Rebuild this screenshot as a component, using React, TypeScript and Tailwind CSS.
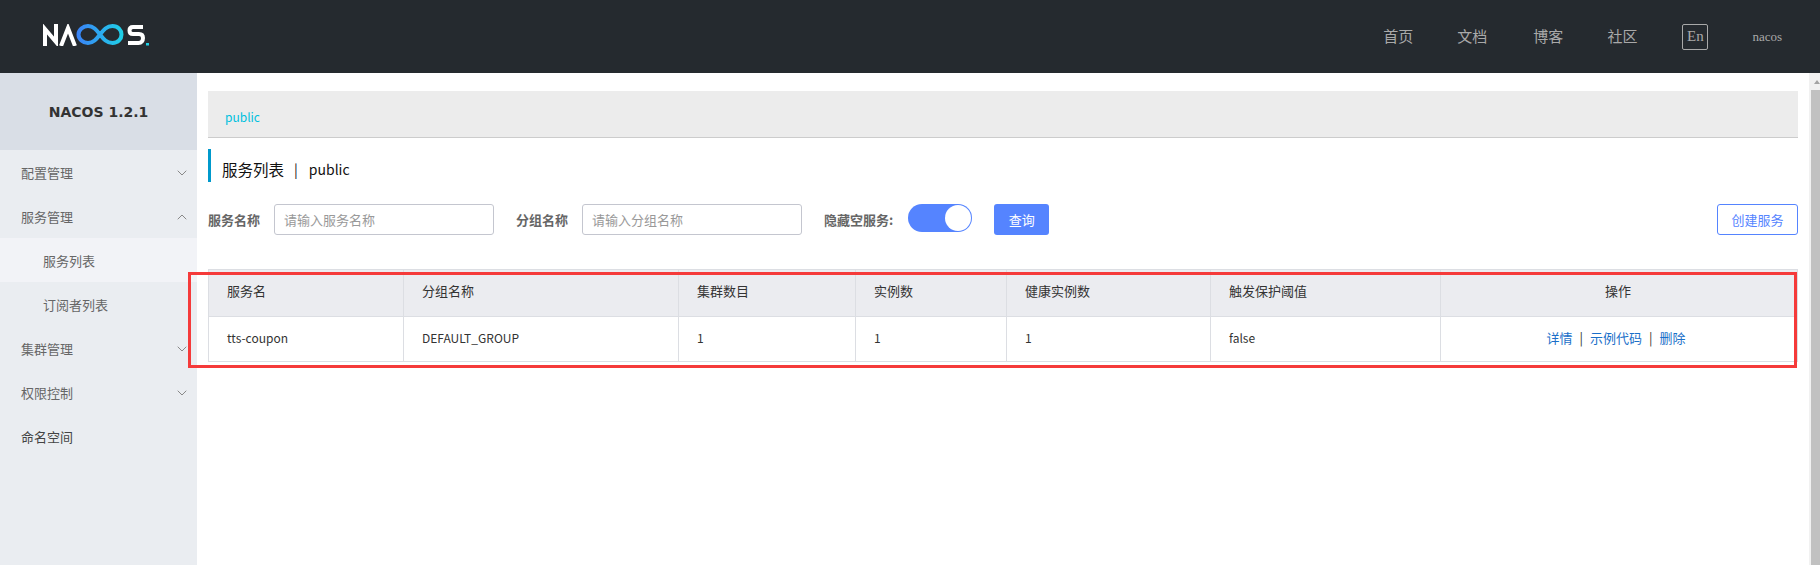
import { ChevronDown, ChevronUp } from "lucide-react";

const nav = [
  { label: "首页", cls: "mr-[44px]" },
  { label: "文档", cls: "mr-[46px]" },
  { label: "博客", cls: "mr-[44px]" },
  { label: "社区", cls: "mr-[45px]" },
];

const menu = [
  { label: "配置管理", icon: "down" },
  { label: "服务管理", icon: "up" },
  { label: "服务列表", sub: true, active: true },
  { label: "订阅者列表", sub: true },
  { label: "集群管理", icon: "down" },
  { label: "权限控制", icon: "down" },
  { label: "命名空间", dark: true },
];

const columns = [
  { label: "服务名", cls: "w-[195px]" },
  { label: "分组名称", cls: "w-[275px]" },
  { label: "集群数目", cls: "w-[177px]" },
  { label: "实例数", cls: "w-[151px]" },
  { label: "健康实例数", cls: "w-[204px]" },
  { label: "触发保护阈值", cls: "w-[230px]" },
];

const row = ["tts-coupon", "DEFAULT_GROUP", "1", "1", "1", "false"];

function Logo() {
  return (
    <svg width="107" height="22" viewBox="0 0 107 22" fill="none" className="mb-[3px]">
      <defs>
        <linearGradient id="loop" x1="34" x2="80" y1="0" y2="0" gradientUnits="userSpaceOnUse">
          <stop offset="0" stopColor="#3a82f7" />
          <stop offset="1" stopColor="#1fd0e6" />
        </linearGradient>
      </defs>
      <path d="M2 22V5L13 18V0" stroke="#fff" strokeWidth="4" />
      <path d="M18 22L25 4L32 22" stroke="#fff" strokeWidth="4" />
      <path
        d="M45 2C40 2 35.500 6 35.500 10.500C35.500 15 40 19 45 19C50.500 19 53.500 15 57 10.500C60.500 6 63.500 2 69.500 2C75 2 78.500 6 78.500 10.500C78.500 15 75 19 69.500 19C63.500 19 60.500 15 57 10.500C53.500 6 50.500 2 45 2Z"
        stroke="url(#loop)"
        strokeWidth="4"
      />
      <path
        d="M100 3H90C87.500 3 86.500 4.500 86.500 6.500C86.500 8.800 88 10 90 10H96C99 10 100 11.800 100 14C100 16.500 98.500 19 95.500 19H85"
        stroke="#fff"
        strokeWidth="4"
      />
      <rect x="103" y="19" width="3" height="2.500" fill="#1fd0e6" />
    </svg>
  );
}

function Header() {
  return (
    <header className="flex h-[73px] shrink-0 items-center bg-[#252a2f] pl-[43px] pr-[38px]">
      <Logo />
      <nav className="ml-auto flex items-center text-[#a9a9a9]">
        {nav.map((n) => (
          <span key={n.label} className={`text-[15px] ${n.cls}`}>
            {n.label}
          </span>
        ))}
        <span className="mr-[44px] flex h-[26px] w-[26px] items-center justify-center rounded-[2px] border border-[#a9a9a9] font-['Liberation_Serif',serif] text-[15px]">
          En
        </span>
        <span className="font-['Liberation_Serif',serif] text-[13px]">nacos</span>
      </nav>
    </header>
  );
}

function Sidebar() {
  return (
    <aside className="w-[197px] shrink-0 bg-[#eaedf1]">
      <div className="flex h-[77px] items-center justify-center bg-[#d9dee6] pt-px font-['DejaVu_Sans',sans-serif] text-[14px] font-bold text-[#333]">
        NACOS 1.2.1
      </div>
      {menu.map((m) => (
        <div
          key={m.label}
          className={`flex h-[44px] items-center pr-[7px] pt-px text-[13px] ${m.sub ? "pl-[43px] text-[#666]" : "pl-[21px]"} ${
            m.active ? "bg-[#f2f3f7]" : ""
          } ${m.dark ? "text-[#444]" : m.sub ? "" : "text-[#666]"}`}
        >
          {m.label}
          {m.icon === "down" ? <ChevronDown size={16} strokeWidth={1.500} className="ml-auto text-[#888]" /> : null}
          {m.icon === "up" ? <ChevronUp size={16} strokeWidth={1.500} className="ml-auto text-[#888]" /> : null}
        </div>
      ))}
    </aside>
  );
}

function SearchForm() {
  return (
    <div className="mt-[22px] flex items-start text-[13px]">
      <label className="mr-[14px] font-bold leading-[31px] text-[#666]">服务名称</label>
      <input
        placeholder="请输入服务名称"
        className="mr-[22px] h-[31px] w-[220px] rounded-[3px] border border-[#c4c6cf] px-[9px] outline-none placeholder:text-[#999]"
      />
      <label className="mr-[14px] font-bold leading-[31px] text-[#666]">分组名称</label>
      <input
        placeholder="请输入分组名称"
        className="mr-[22px] h-[31px] w-[220px] rounded-[3px] border border-[#c4c6cf] px-[9px] outline-none placeholder:text-[#999]"
      />
      <label className="mr-[15px] font-bold leading-[31px] text-[#666]">隐藏空服务:</label>
      <div className="mr-[22px] flex h-[28px] w-[64px] justify-end rounded-full bg-[#5584ff] p-px">
        <div className="h-[26px] w-[26px] rounded-full bg-white" />
      </div>
      <button className="h-[31px] w-[55px] rounded-[3px] bg-[#5584ff] text-white">查询</button>
      <button className="ml-auto h-[31px] w-[81px] rounded-[3px] border border-[#5584ff] text-[#5584ff]">创建服务</button>
    </div>
  );
}

function ServiceTable() {
  return (
    <div className="relative mt-[34px]">
      <table className="w-[1590px] table-fixed border-collapse text-left text-[13px] text-[#333]">
        <thead>
          <tr className="h-[47px] bg-[#ebecf0]">
            {columns.map((c) => (
              <th key={c.label} className={`border border-[#dcdee3] pb-[4px] pl-[18px] font-normal ${c.cls}`}>
                {c.label}
              </th>
            ))}
            <th className="border border-[#dcdee3] pb-[4px] pr-[2px] text-center font-normal">操作</th>
          </tr>
        </thead>
        <tbody>
          <tr className="h-[45px]">
            {row.map((v, i) => (
              <td key={i} className="border border-[#dcdee3] pb-[2px] pl-[18px] text-[12px]">
                {v}
              </td>
            ))}
            <td className="border border-[#dcdee3] pb-[2px] pr-[6px] text-center text-[13px] text-[#1a6fc9]">
              详情<span className="mx-[7px] text-[#333]">|</span>示例代码<span className="mx-[7px] text-[#333]">|</span>删除
            </td>
          </tr>
        </tbody>
      </table>
      {/* annotation drawn over the screenshot */}
      <div className="pointer-events-none absolute left-[-20px] top-[3px] h-[96px] w-[1609px] border-[3px] border-[#f53a3a]" />
    </div>
  );
}

function Scrollbar() {
  return (
    <div className="flex w-[11px] shrink-0 flex-col bg-[#f1f1f1] pl-[2px]">
      <div className="flex h-[17px] items-end justify-end pb-[6px]">
        <svg width="6" height="4" viewBox="0 0 6 4">
          <path d="M3 0L6 4H0Z" fill="#a3a3a3" />
        </svg>
      </div>
      <div className="flex-1 bg-[#c1c1c1]" />
    </div>
  );
}

export default function App() {
  return (
    <div className="flex h-[565px] w-[1820px] flex-col overflow-hidden bg-white font-['Noto_Sans_CJK_SC','Noto_Sans',sans-serif]">
      <Header />
      <div className="flex flex-1">
        <Sidebar />
        <main className="flex-1 px-[11px] pt-[18px]">
          <div className="flex h-[47px] items-end border-b border-[#ccc] bg-[#ececec] px-[17px] pb-[11px] text-[12px] text-[#00c1de]">
            public
          </div>
          <div className="mt-[11px] flex h-[33px] items-center border-l-[3px] border-[#09c] pl-[11px] pt-[8px] text-[15.500px] text-[#111]">
            服务列表<span className="ml-[10px] mr-[11px] text-[14px]">|</span>
            <span className="text-[14px]">public</span>
          </div>
          <SearchForm />
          <ServiceTable />
        </main>
        <Scrollbar />
      </div>
    </div>
  );
}
